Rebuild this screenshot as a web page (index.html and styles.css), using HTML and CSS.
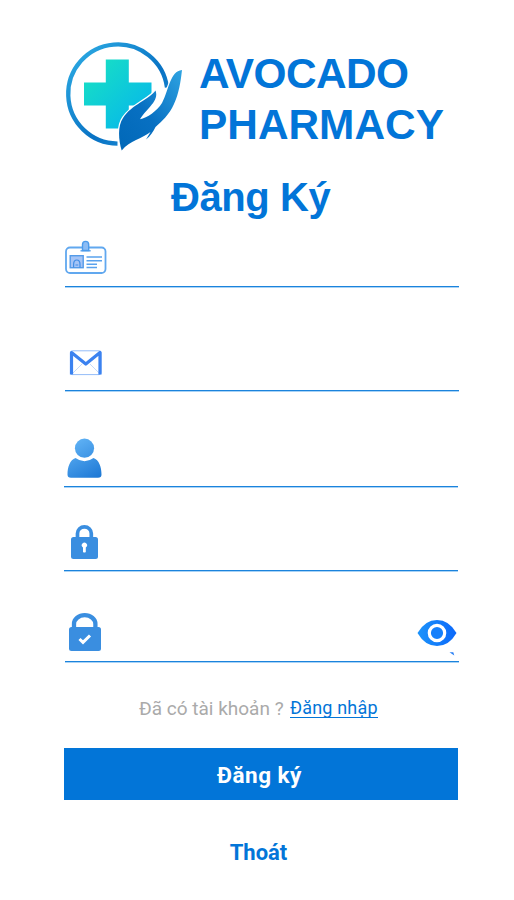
FILE: index.html
```html
<!DOCTYPE html>
<html lang="vi">
<head>
<meta charset="utf-8">
<title>Avocado Pharmacy</title>
<link rel="stylesheet" href="styles.css">
</head>
<body>
<main class="page">
  <header class="brand">
    <svg class="logo" viewBox="65 40 120 112" aria-hidden="true">
      <defs>
        <linearGradient id="ring" x1="0" y1="0" x2="1" y2="1"><stop offset="0" stop-color="#30b0e6"/><stop offset=".6" stop-color="#0872c4"/><stop offset="1" stop-color="#2496da"/></linearGradient>
        <linearGradient id="cross" x1="0" y1="0" x2="1" y2="1"><stop offset=".15" stop-color="#16dcc8"/><stop offset=".8" stop-color="#08bce6"/></linearGradient>
        <linearGradient id="hand" x1="1" y1="0" x2="0" y2="1"><stop offset="0" stop-color="#2fa4e2"/><stop offset=".55" stop-color="#0870c2"/><stop offset="1" stop-color="#0068b8"/></linearGradient>
      </defs>
      <path d="M117.500 143.600A49.600 49.600 0 1 1 167 87.500" fill="none" stroke="url(#ring)" stroke-width="4.300"/>
      <path d="M105.800 59.500h23v23h22.700v23h-22.700v23h-23v-23H84v-23h21.800z" fill="url(#cross)"/>
      <path d="M121.700 150.500C118.500 140 117.500 126 123 118C131 105 150 99 155.500 90.500C159.500 101 147 108 140 119.300C147 118 157 111 162 103C169 90 170 71 182 70C180.500 83 179 93 174 104C169 115 162 121 155.500 127C153.500 131 150.500 136 146 139.500L150.500 132C142 139 130 140 121.700 150.500Z" fill="url(#hand)" stroke="#fff" stroke-width="2.600" paint-order="stroke"/>
    </svg>
    <h1 class="name"><span class="first">AVOCADO</span><br>PHARMACY</h1>
  </header>
  <h2 class="title">Đăng Ký</h2>
  <form class="form">
    <div class="field field-id">
      <svg class="icon" viewBox="63 238 46 38" aria-hidden="true">
        <rect x="66" y="247.500" width="39.500" height="25.500" rx="4" fill="#fff" stroke="#61a8ef" stroke-width="1.800"/>
        <path d="M82.500 250.500V244.500a3.100 3.100 0 0 1 6.200 0V250.500z" fill="#8cbcf4" stroke="#4c9beb" stroke-width="1.400"/>
        <path d="M80.500 250.800h10.200" stroke="#4c9beb" stroke-width="1.300"/>
        <rect x="70.200" y="255.700" width="13" height="12" fill="#a5c4f6" stroke="#549be9" stroke-width="1.400"/>
        <path d="M73.600 267.500v-3q0-4.500 3.200-4.500t3.200 4.500v3M75.500 265h2.700" fill="none" stroke="#408de5" stroke-width="1.200"/>
        <path d="M86.500 257h15.500M86.500 260.800h15.500M86.500 264.200h10.500M86.500 267.500h10.500" stroke="#5aa2ed" stroke-width="1.500"/>
      </svg>
    </div>
    <div class="field field-mail">
      <svg class="icon" viewBox="63 342 46 38" aria-hidden="true">
        <rect x="70.500" y="350.800" width="30.500" height="23.800" rx="2" fill="#fff" stroke="#94bcf8"/>
        <path d="M72 374l10-10M100 374l-10-10" stroke="#c5daf9"/>
        <path d="M71.500 374.500V352.500L85.800 364L100 352.500V374.500" fill="none" stroke="#3b82f0" stroke-width="3.200" stroke-linejoin="round"/>
      </svg>
    </div>
    <div class="field field-user">
      <svg class="icon" viewBox="63 436 46 44" aria-hidden="true">
        <defs><linearGradient id="person" gradientUnits="userSpaceOnUse" x1="72" y1="440" x2="95" y2="480"><stop stop-color="#62b4f6"/><stop offset="1" stop-color="#1d78d5"/></linearGradient></defs>
        <g fill="url(#person)"><circle cx="84.500" cy="448.200" r="9.600"/><path d="M75.500 458Q84.500 464.500 93.500 458C99 460 101.500 467 101.500 474.500Q101.500 477.800 98 477.800H71Q67.500 477.800 67.500 474.500C67.500 467 70 460 75.500 458Z"/></g>
      </svg>
    </div>
    <div class="field field-pass">
      <svg class="icon" viewBox="63 522 46 40" aria-hidden="true">
        <path d="M77.500 538V533.500a6.900 6.700 0 0 1 13.800 0V538" fill="none" stroke="#3a8ee0" stroke-width="3.700"/>
        <rect x="71" y="537" width="27" height="22" rx="2.500" fill="#3a8ee0"/>
        <path d="M83 547.500a2.600 2.600 0 1 1 2.800 0v4.500q-1.400 1.200-2.800 0z" fill="#fff"/>
      </svg>
    </div>
    <div class="field field-confirm">
      <svg class="icon" viewBox="63 610 46 44" aria-hidden="true">
        <path d="M74 628V624a10.700 8.800 0 0 1 21.400 0V628" fill="none" stroke="#3a8ee0" stroke-width="4.300"/>
        <rect x="69" y="627" width="32" height="24" rx="2.500" fill="#3a8ee0"/>
        <path d="M79.500 639l3.500 3.300L90 635.500" fill="none" stroke="#fff" stroke-width="3"/>
      </svg>
      <svg class="eye" viewBox="415 616 44 42" aria-hidden="true">
        <defs><linearGradient id="iris"><stop stop-color="#1c93fa"/><stop offset="1" stop-color="#0b68fa"/></linearGradient></defs>
        <path d="M417.500 633Q425 620 437 620T456.500 633Q449 646 437 646T417.500 633Z" fill="url(#iris)"/>
        <circle cx="437" cy="633" r="7.700" fill="#1680fb" stroke="#fff" stroke-width="3.200"/>
        <path d="M449.500 652.300h3.800l1 3.200z" fill="#267ef5"/>
      </svg>
    </div>
    <p class="account"><span class="question">Đã có tài khoản ?</span><a class="login">Đăng nhập</a></p>
    <button class="submit" type="button">Đăng ký</button>
    <button class="exit" type="button">Thoát</button>
  </form>
</main>
</body>
</html>
```
FILE: styles.css
```css
* { box-sizing: border-box; }
body { margin: 0; background: #fff; font-family: "Liberation Sans", Arial, sans-serif; color: #0275d8; }
.page { width: 514px; height: 900px; padding-top: 40px; overflow: hidden; }
.brand { display: flex; height: 112px; padding-left: 65px; }
.logo { width: 120px; height: 112px; flex: none; }
.name { margin: 8px 0 0 14px; font-size: 42.4px; line-height: 51px; font-weight: 700; }
.first { letter-spacing: -.6px; }
.title { margin: 20px 0 0 171px; font-size: 40px; line-height: 50px; height: 50px; font-weight: 700; letter-spacing: -.4px; }
.form { display: flex; flex-direction: column; width: 394px; margin-left: 64px; }
.field { display: flex; justify-content: space-between; border-bottom: 1px solid #1b83dc; box-shadow: 0 1px 0 #a9d3f6; }
.icon { display: block; flex: none; width: 46px; height: 38px; margin-left: -1px; }
.field-id, .field-mail, .field-confirm { margin-left: 1px; width: 394px; }
.field-id .icon, .field-mail .icon, .field-confirm .icon { margin-left: -2px; }
.field-id { height: 65px; padding-top: 16px; }
.field-mail { height: 104px; padding-top: 55px; }
.field-user { height: 96px; padding-top: 45px; }
.field-pass { height: 84px; padding-top: 35px; }
.field-confirm { height: 91px; padding-top: 39px; }
.field-user .icon, .field-confirm .icon { height: 44px; }
.field-pass .icon { height: 40px; }
.eye { width: 44px; height: 42px; margin: 6px 0 0; flex: none; }
.account { display: flex; align-items: flex-start; margin: 36px 0 0 75px; height: 50px; font-family: Roboto, sans-serif; line-height: 22px; white-space: nowrap; }
.question { width: 151px; color: #aaa; font-size: 19px; }
.login { height: 20px; border-bottom: 1px solid #0275d8; font-size: 18px; line-height: 20px; letter-spacing: .17px; }
.submit, .exit { border: 0; padding: 0; font-family: Roboto, sans-serif; font-weight: 700; }
.submit { height: 52px; padding: 2px 3px 0 0; background: #0275d8; color: #fff; font-size: 22.5px; letter-spacing: .5px; }
.exit { align-self: center; margin: 39px 5px 0 0; height: 28px; line-height: 28px; background: none; color: #0275d8; font-size: 22px; letter-spacing: 0; }
```
